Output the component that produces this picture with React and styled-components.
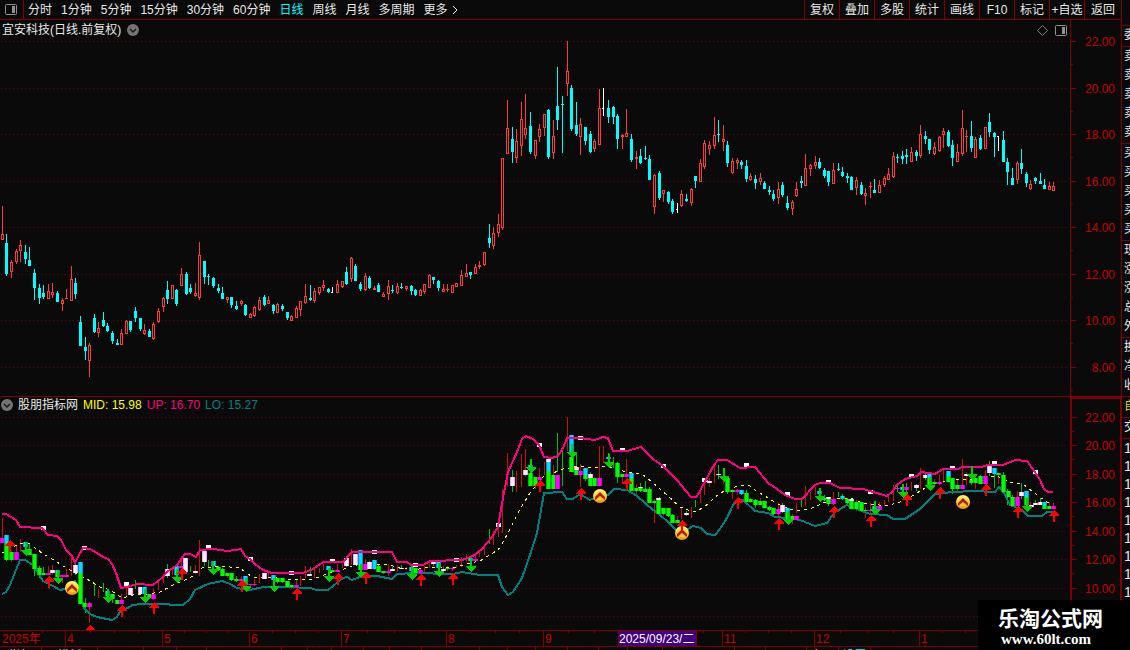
import React from "react"
import styled, { createGlobalStyle } from "styled-components"

const COLORS = {
  bg: "#0a0a0a",
  line: "#800000",
  label: "#c80000",
  text: "#e8e8e8",
  rise: "#ff3a3a",
  fall: "#00ffff",
  upper: "#ff0080",
  lower: "#008080",
  mid: "#ffff00",
}

const GlobalStyle = createGlobalStyle`
  body {
    margin: 0;
    overflow: hidden;
    background: ${COLORS.bg};
    color: ${COLORS.text};
    font: 12px/16px "Liberation Sans", "Noto Sans CJK SC", sans-serif;
  }
`

// kind (r: rise, c: fall, w: flat), high, body top, body bottom, low
const CANDLES = `
r 206 234 240 240|c 234 243 274 276|r 260 262 272 278|r 249 251 262 264|r 240 245 251 262
c 245 252 259 264|c 247 260 266 266|c 269 273 288 300|c 284 288 298 304|c 285 293 297 299
r 284 291 299 299|r 283 292 295 298|c 291 293 302 302|r 298 300 304 311|r 289 298 299 299
r 266 279 301 301|c 278 283 294 299|c 316 322 346 346|c 337 347 351 360|r 343 345 361 377
c 314 318 332 333|r 322 328 333 337|c 312 320 326 327|c 323 326 331 332|c 331 333 341 344
c 339 343 345 345|r 329 333 345 345|r 320 321 334 334|c 321 321 330 332|c 307 311 318 322
c 318 318 329 331|r 324 330 334 335|c 329 331 337 337|r 322 324 339 340|r 308 311 322 323
r 297 298 307 312|c 281 290 299 304|r 285 285 299 299|c 289 290 304 306|r 268 274 286 286
c 272 274 294 295|c 284 288 292 294|r 283 293 296 297|r 242 255 298 300|c 261 261 277 284
c 274 276 277 285|c 277 278 286 288|c 284 288 291 293|c 287 293 299 299|r 297 297 300 303
c 297 297 305 308|c 301 306 309 310|r 300 301 304 306|c 304 305 315 316|r 313 314 318 318
r 306 307 316 317|r 297 300 310 311|c 295 297 305 306|r 296 300 304 304|c 304 305 311 314
r 303 304 313 313|c 304 306 309 311|c 312 312 318 320|r 315 316 321 321|r 306 308 318 318
r 301 301 310 316|r 284 296 303 304|c 285 298 300 301|r 288 291 301 303|r 287 287 293 295
r 280 285 288 291|c 288 289 292 293|w 287 292 293 293|r 280 284 293 293|r 281 281 287 288
c 267 272 284 285|r 257 258 279 282|c 264 266 281 281|c 282 284 289 291|r 273 276 290 291
c 276 278 288 289|r 286 288 290 290|c 283 285 292 292|r 292 294 297 297|r 280 286 294 300
c 285 290 291 293|r 283 286 293 294|c 283 287 288 289|r 286 286 289 291|c 285 286 291 295
c 289 290 295 296|r 289 290 296 296|r 284 284 292 294|r 274 275 288 288|c 277 277 280 284
c 280 281 288 291|r 284 289 292 292|r 284 289 290 292|r 285 285 293 293|r 283 283 287 287
r 270 275 286 286|r 264 273 277 277|c 272 272 275 279|r 264 267 274 274|r 261 265 267 269
r 252 252 265 266|c 224 238 243 248|r 227 233 246 249|r 214 224 233 237|r 158 158 228 230
r 100 128 154 154|c 127 139 152 163|r 129 141 158 163|r 102 119 146 156|r 94 128 135 139
c 112 126 152 154|r 140 140 156 159|r 124 129 137 142|r 114 114 128 136|c 109 110 157 159
r 120 136 153 159|c 67 106 120 130|c 96 104 105 153|r 41 71 84 96|c 85 88 129 131
c 102 125 134 136|r 118 124 137 155|c 127 127 141 145|c 131 134 152 153|r 139 141 149 152
r 89 108 145 145|w 88 108 109 116|c 100 108 117 123|c 106 107 117 124|c 114 116 139 149
r 134 135 137 149|r 109 133 137 137|c 134 139 160 162|r 151 157 159 169|c 149 156 163 164
c 146 158 159 160|c 155 159 180 180|r 174 175 207 214|c 171 173 198 200|r 190 190 194 202
c 191 192 202 204|c 199 201 212 214|w 203 209 210 213|r 190 194 206 207|c 194 199 201 202
r 188 189 203 206|c 176 176 181 188|r 159 163 182 182|r 140 143 167 169|r 141 145 149 155
r 117 135 146 149|c 120 134 135 142|r 125 139 142 151|c 141 145 163 167|r 158 161 173 174
r 158 160 163 169|c 160 162 165 169|c 160 166 179 182|r 173 176 180 181|c 175 179 183 189
r 173 178 182 185|c 181 183 189 189|c 186 190 192 195|c 190 194 199 201|r 182 189 198 204
c 182 185 195 197|c 196 203 208 210|r 200 202 209 215|r 182 189 196 197|c 176 181 183 188
r 154 168 186 186|r 164 165 169 176|r 156 162 166 169|c 158 162 168 169|c 168 170 176 178
c 171 171 182 186|r 163 170 184 184|c 163 169 170 171|c 167 172 176 177|c 173 176 178 183
c 176 177 190 190|r 177 180 188 195|c 182 185 194 195|r 188 193 196 205|r 182 186 187 198
c 179 190 193 193|r 180 185 193 193|r 176 178 185 187|r 168 174 180 180|r 152 156 177 178
c 154 157 158 163|c 151 156 159 164|c 149 155 157 164|r 147 152 162 162|c 150 152 156 161
r 125 134 156 158|c 131 136 139 144|c 139 139 150 154|r 142 147 154 155|r 136 137 151 152
r 128 131 135 148|c 130 132 146 147|c 140 145 158 166|r 144 152 162 162|r 110 128 154 156
r 130 136 137 152|c 121 136 148 152|r 137 139 158 158|c 135 138 149 150|r 127 127 149 149
c 113 122 132 137|c 132 133 137 157|w 136 136 137 151|c 131 140 162 162|c 158 162 172 185
c 168 178 185 185|r 161 163 180 184|c 149 163 169 174|c 172 174 183 187|r 180 184 189 190
c 177 178 181 184|c 173 181 184 184|c 179 185 189 189|r 182 186 190 190|r 182 186 191 191`
  .trim()
  .split(/[|\n]/)
  .map((row, index) => {
    const [kind, ...values] = row.split(" ")
    const [high, top, bottom, low] = values.map(Number)
    return { kind, high, top, bottom, low, x: Math.floor(2.35 + index * 4.592) }
  })

// x, colour, top, bottom of the painted bodies of the indicator
const BLOCKS = `
2 m 538 543|6 b 535 543|6 g 543 560|11 g 552 560|16 m 552 560|25 b 542 547|29 g 549 555|34 g 554 569
39 g 568 575|43 g 573 575|48 m 573 575|52 w 570 573|57 b 570 572|57 g 572 577|61 m 575 577|66 m 575 577
75 w 565 573|80 b 562 573|80 g 573 604|84 g 603 607|89 m 603 607|107 b 591 593|107 g 593 596|112 g 594 599
117 g 600 604|121 m 600 604|130 w 588 595|140 w 587 594|144 b 587 594|149 g 594 598|153 m 594 599
167 w 569 576|176 b 566 575|181 m 566 568|185 w 558 572|195 w 571 573|204 w 551 562|213 b 561 566
218 g 567 570|222 g 569 576|227 g 573 576|231 g 573 580|236 g 579 581|241 m 579 581|245 b 576 581
245 g 581 585|250 m 584 585|254 m 584 585|264 w 573 579|273 b 575 580|277 g 578 582|282 g 578 582
287 g 581 587|291 g 585 587|296 m 585 587|309 w 574 576|328 b 566 570|332 g 570 572|337 m 570 572
346 w 558 566|355 w 554 565|360 b 550 565|360 g 565 570|365 m 564 570|369 w 562 569|374 b 560 569
378 g 566 572|383 g 571 573|388 m 571 573|392 w 569 571|401 w 568 569|411 b 567 571|415 g 568 573
420 m 570 573|433 w 561 564|438 b 560 568|443 w 569 571|447 g 568 569|452 m 568 569|470 b 558 561
475 m 559 561|512 w 477 486|525 w 470 475|530 b 465 470|530 g 473 486|535 g 477 486|539 m 477 480
548 w 459 462|548 b 462 471|548 g 471 489|553 g 475 489|557 m 475 489|571 b 435 452|571 g 457 472
576 w 467 470|576 g 470 475|580 m 471 475|585 b 468 475|585 g 475 479|590 w 474 478|590 g 478 486
594 g 478 486|599 m 478 486|608 b 457 459|617 g 463 477|622 g 474 477|626 m 474 477|631 b 473 478
631 g 478 491|636 g 488 491|640 w 487 488|640 g 488 491|645 g 489 492|649 g 489 503|654 g 501 503
658 w 498 500|658 g 500 514|663 g 508 514|668 g 508 516|672 g 515 523|677 g 520 523|686 w 513 515
705 w 480 482|709 w 481 483|718 w 474 475|727 g 478 492|732 g 490 492|737 m 490 492|741 b 490 494
746 g 493 502|750 g 499 502|755 g 500 505|760 g 501 505|764 g 501 508|769 g 507 510|773 g 508 514
778 m 509 514|782 w 505 512|787 b 508 512|787 g 512 520|792 g 516 520|796 m 516 520|819 b 491 494
824 g 498 500|828 w 497 499|828 g 499 504|833 m 499 504|842 b 496 498|842 g 498 499|847 g 499 503
851 w 499 501|851 g 501 509|856 g 502 509|861 g 502 511|865 g 510 511|870 m 510 511|874 b 506 510
879 m 506 510|897 m 488 489|902 b 487 490|906 m 487 490|916 w 485 488|925 w 475 478|929 b 474 478
929 g 478 485|934 g 482 484|939 m 482 484|948 b 471 476|948 g 476 482|952 g 478 489|957 g 485 489
962 m 485 489|966 w 474 476|971 g 480 483|975 g 478 483|980 g 476 484|985 m 476 484|989 w 465 473
994 b 468 474|998 g 473 475|1003 g 475 492|1008 g 491 497|1012 g 497 506|1017 m 497 506|1021 w 492 496
1026 b 491 497|1026 g 497 505|1031 w 505 507|1035 w 503 505|1040 w 502 505|1044 b 502 505|1044 g 505 509
1049 g 506 509|1053 m 506 509`
  .trim()
  .split(/[|\n]/)
  .map((row) => {
    const [x, tone, top, bottom] = row.split(" ")
    return { x: Number(x), tone, top: Number(top), bottom: Number(bottom) }
  })

// edge and centre of each body colour
const TONES = {
  g: ["#00b400", "#00ff00"],
  b: ["#0090e8", "#00dcff"],
  m: ["#d000d0", "#ff00ff"],
  w: ["#ff9cff", "#fff0ff"],
}

const UP_LINE =
  "2,514 6,514 11,517 16,520 20,527 42,528 48,535 57,536 61,540 66,550 72,556 75,563 79,555 83,548 90,549 97,553 103,557 108,559 112,564 116,573 121,588 127,587 137,584 153,585 163,577 167,572 177,565 185,554 190,554 196,557 200,550 213,549 228,551 241,549 245,556 250,559 255,564 263,570 272,573 303,573 313,569 323,562 343,562 352,552 392,552 397,562 407,562 411,565 423,565 430,561 462,560 473,556 482,549 492,537 498,527 503,498 508,472 517,452 522,439 526,436 533,439 539,445 544,457 552,458 558,456 563,448 567,438 580,438 595,440 603,437 608,438 613,451 627,451 641,447 653,459 663,466 670,473 677,480 686,491 691,497 696,497 699,493 703,485 708,476 714,465 718,460 727,460 740,468 755,467 769,484 773,486 785,495 795,499 802,499 815,485 820,483 830,483 840,488 863,489 887,496 892,492 897,485 905,479 917,476 921,472 935,474 943,469 958,469 962,467 982,467 987,465 1003,465 1015,460 1027,461 1035,472 1040,480 1044,489 1048,492 1053,492"

const LO_LINE =
  "2,594 6,592 10,585 20,560 25,560 33,565 43,581 53,586 60,590 65,589 75,581 81,596 84,608 90,614 97,617 112,620 117,617 121,610 128,608 132,605 143,604 167,604 172,605 183,605 190,599 195,590 208,584 222,581 230,584 237,588 250,590 263,587 287,587 310,588 317,590 328,590 343,578 347,577 352,580 360,577 377,576 392,579 397,574 413,573 453,574 462,572 480,575 498,575 502,587 508,595 513,592 522,578 530,555 537,533 544,493 562,492 567,499 573,499 580,494 590,500 595,498 608,495 614,489 627,490 637,496 653,510 658,513 670,524 677,531 683,532 693,526 701,528 707,534 715,535 720,529 727,518 733,505 739,500 743,500 755,511 768,513 775,517 787,518 800,520 815,526 827,523 835,512 847,505 857,509 870,514 887,515 893,519 905,519 920,509 935,494 953,492 973,491 995,492 999,487 1004,493 1010,505 1015,507 1022,510 1028,516 1042,516 1047,512 1053,512"

const MID_LINE =
  "2,553 12,548 20,543 30,544 42,553 60,564 73,572 87,579 100,587 110,590 122,598 133,595 148,594 160,592 173,585 190,578 202,568 220,566 240,568 252,577 277,578 290,580 313,579 330,573 347,568 360,564 390,565 400,568 413,570 430,567 457,567 470,563 480,561 493,553 500,548 510,529 520,509 530,493 543,477 563,469 580,466 590,468 607,466 623,471 642,474 653,483 667,495 680,507 693,512 703,508 720,493 730,489 740,485 750,486 758,492 770,499 783,507 797,511 810,509 823,503 837,499 850,498 863,503 887,506 903,501 917,493 930,485 940,483 953,479 973,479 997,476 1010,482 1023,484 1037,495 1047,502 1053,502"

const MARKS = [
  [43, 528], [84, 548], [126, 584], [208, 547], [250, 559], [291, 573],
  [332, 561], [374, 552], [415, 565], [456, 560], [498, 525], [539, 445],
  [580, 438], [622, 450], [663, 466], [704, 480], [746, 465], [787, 494],
  [828, 482], [870, 492], [911, 476], [952, 468], [994, 463], [1035, 472],
]

const BUYS = [
  [10, 540], [49, 576], [90, 625], [122, 605], [154, 602], [182, 568],
  [242, 580], [297, 588], [338, 573], [366, 572], [421, 574], [453, 573],
  [540, 480], [581, 488], [627, 478], [682, 520], [738, 497], [779, 518],
  [834, 506], [871, 515], [907, 494], [940, 487], [986, 484], [1018, 506],
  [1054, 510],
]

const SELLS = [
  [26, 556], [58, 584], [108, 603], [145, 603], [177, 583], [213, 575],
  [246, 592], [274, 592], [329, 582], [361, 578], [412, 580], [439, 577],
  [471, 572], [531, 473], [572, 458], [609, 468], [724, 482], [788, 525],
  [820, 502], [875, 515], [903, 498], [930, 491], [972, 480], [1027, 512],
]

const COINS = [[72, 588], [600, 496], [682, 533], [963, 502]]

const PRICE_SCALE = [
  [41, "22.00"], [88, "20.00"], [134, "18.00"], [181, "16.00"],
  [227, "14.00"], [274, "12.00"], [320, "10.00"], [367, "8.00"],
]

const INDICATOR_SCALE = [
  [417, "22.00"], [445, "20.00"], [474, "18.00"], [502, "16.00"],
  [531, "14.00"], [559, "12.00"], [588, "10.00"], [616, ""],
]

const MONTHS = [
  [65, "4"], [162, "5"], [249, "6"], [341, "7"], [446, "8"],
  [543, "9"], [722, "11"], [814, "12"], [919, "1"],
]

const WEEKS = [
  42, 90, 114, 138, 184, 206, 227, 272, 295, 318, 367, 394, 420, 470, 495,
  519, 568, 594, 703, 745, 768, 791, 840, 867, 893, 942, 965,
]

const PERIODS = [
  "分时", "1分钟", "5分钟", "15分钟", "30分钟", "60分钟",
  "日线", "周线", "月线", "多周期",
]

const ACTIONS = [
  "复权", "叠加", "多股", "统计", "画线", "F10", "标记", "+自选", "返回",
]

const QUOTE_GROUPS = [
  ["委"],
  ["卖", "卖", "卖", "卖", "卖"],
  ["买", "买", "买", "买", "买"],
  ["现", "涨", "涨", "总", "外"],
  ["换", "净", "收"],
]

const TABS = [
  [42, "指标"], [56, "模板"], [46, ""], [33, ""], [30, ""], [75, ""],
  [26, ""], [24, ""], [32, ""], [26, ""], [32, ""], [58, ""], [28, ""],
  [28, ""], [32, ""], [31, ""], [29, ""], [35, ""], [72, ""], [31, ""],
  [41, ""], [32, "窗口"], [32, "设置", true],
]

const Page = styled.div`
  display: flex;
  height: 100vh;
  overflow: hidden;
`

const Main = styled.main`
  display: flex;
  flex: 1;
  flex-direction: column;
  min-width: 0;
`

const Toolbar = styled.header`
  display: flex;
  flex: none;
  box-sizing: border-box;
  height: 20px;
  border-bottom: 1px solid ${COLORS.line};
`

const ToolButton = styled.button`
  padding: 0;
  border: 0;
  background: none;
  color: ${(props) => (props.$active ? COLORS.fall : COLORS.text)};
  font: inherit;
  line-height: 18px;
  white-space: nowrap;
`

const LayoutButton = styled(ToolButton)`
  display: flex;
  align-items: center;
  padding: 0 6px 0 5px;
  border-right: 1px solid ${COLORS.line};
`

const Periods = styled.nav`
  display: flex;
  flex: 1;
  gap: 9px;
  padding-left: 4px;
`

const MoreButton = styled(ToolButton)`
  display: flex;
  align-items: center;
  gap: 4px;
`

const Actions = styled.div`
  display: flex;
`

const ActionButton = styled(ToolButton)`
  box-sizing: border-box;
  width: 35px;
  border-left: 1px solid ${COLORS.line};

  &:last-child {
    width: 37px;
  }
`

const Pane = styled.section`
  display: flex;
  flex: none;
`

const IndicatorPane = styled(Pane)`
  border-top: 1px solid ${COLORS.line};
`

const PlotColumn = styled.div`
  flex: 1;
  min-width: 0;
`

const PaneHeader = styled.div`
  display: flex;
  align-items: center;
  height: 20px;
  gap: 6px;
  padding: 0 3px 0 2px;
`

const IndicatorHeader = styled(PaneHeader)`
  height: 16px;
  gap: 5px;
  padding: 0 1px;
`

const PaneTitle = styled.h2`
  margin: 0;
  font: inherit;
`

const Reading = styled.span`
  color: ${(props) => props.$color};
`

const IconButton = styled.button`
  display: flex;
  padding: 0;
  border: 0;
  background: none;
`

const PaneTools = styled.div`
  display: flex;
  align-items: center;
  gap: 7px;
  margin-left: auto;
`

const Drawing = styled.svg`
  display: block;
  width: 100%;
  font: inherit;
`

const Scale = styled.div`
  box-sizing: border-box;
  width: 51px;
  border-left: 1px solid ${COLORS.line};
`

const FramedScale = styled(Scale)`
  border-width: 2px 1px 0 2px;
  border-style: solid;
  border-color: ${COLORS.line};
`

const Tabs = styled.footer`
  display: flex;
  flex: 1;
  overflow: hidden;
`

const Tab = styled.button`
  flex: none;
  box-sizing: border-box;
  width: ${(props) => props.$width}px;
  height: 18px;
  padding: 0;
  border: 0;
  border-right: 1px solid ${COLORS.line};
  background: none;
  color: ${(props) => (props.$active ? COLORS.fall : COLORS.text)};
  font: inherit;
`

const Sidebar = styled.aside`
  box-sizing: border-box;
  width: 9px;
  padding-top: 25px;
  overflow: hidden;
  border-left: 1px solid ${COLORS.line};
`

const QuoteGroup = styled.div`
  width: 40px;
  padding-bottom: 1px;
  border-top: 1px solid ${COLORS.line};
  color: ${(props) => props.$color || COLORS.text};
`

const QuoteRow = styled.div`
  height: ${(props) => (props.$tick ? 18 : 19)}px;
  padding-left: 2px;
  font-size: ${(props) => (props.$tick ? 14 : 12)}px;
  line-height: 19px;
`

const Watermark = styled.div`
  position: fixed;
  right: 0;
  bottom: 0;
  box-sizing: border-box;
  width: 152px;
  height: 50px;
  padding: 6px 0 0 20px;
  background: #000;
  color: #fff;
  font-weight: bold;
`

const SiteName = styled.div`
  font-size: 21px;
  line-height: 25px;
`

const SiteLink = styled.a`
  display: block;
  padding-left: 3px;
  color: inherit;
  font: bold 15px/16px "Liberation Serif", serif;
  text-decoration: none;
`

const PanelIcon = () => (
  <svg width="12" height="11">
    <rect x="0.5" y="0.5" width="11" height="10" rx="1" fill="none" stroke="#909090" />
    <rect x="7" y="2" width="3" height="7" fill="#909090" />
  </svg>
)

const ChevronBadge = () => (
  <svg width="12" height="12">
    <circle cx="6" cy="6" r="6" fill="#747474" />
    <path d="M3 5l3 3 3-3" fill="none" stroke="#181818" strokeWidth="1.5" />
  </svg>
)

const GridLines = ({ scale }) =>
  scale.map(([y]) => (
    <line
      key={y}
      x1="1"
      x2="1067"
      y1={y + 0.5}
      y2={y + 0.5}
      stroke="#700606"
      strokeDasharray="1 3"
    />
  ))

const ScaleTicks = ({ scale, left, step }) =>
  scale.map(([y, label]) => (
    <g key={y}>
      <rect x={left} y={y} width="5" height="1" fill={COLORS.line} />
      <rect x={left} y={y + step} width="2" height="1" fill={COLORS.line} />
      {label && (
        <text x="1115" y={y + 5} textAnchor="end" fill={COLORS.label}>
          {label}
        </text>
      )}
    </g>
  ))

const Candle = ({ kind, high, top, bottom, low, x }) => {
  const color = { r: COLORS.rise, c: COLORS.fall, w: "#fff" }[kind]
  const height = bottom - top
  return (
    <g fill={color}>
      <rect x={x} y={high} width="1" height={low - high} />
      <rect x={x - 1} y={top} width={kind === "w" ? 2 : 3} height={height} />
      {kind === "r" && height > 2 && (
        <rect x={x} y={top + 1} width="1" height={height - 2} fill={COLORS.bg} />
      )}
    </g>
  )
}

// The indicator shows the same highs and lows on a flatter scale
const toIndicator = (y) => Math.round(417 + (y - 41) * 0.613)

const ThinWick = ({ kind, high, low, x }) => (
  <rect
    x={x}
    y={toIndicator(high)}
    width="1"
    height={toIndicator(low) - toIndicator(high)}
    fill={kind === "c" ? "#00c000" : "#c81400"}
  />
)

const Block = ({ x, tone, top, bottom }) => (
  <g>
    <rect x={x - 2} y={top} width="5" height={bottom - top} fill={TONES[tone][0]} />
    <rect x={x - 1} y={top} width="3" height={bottom - top} fill={TONES[tone][1]} />
  </g>
)

const Coin = ({ x, y }) => (
  <g transform={`translate(${x} ${y})`} shapeRendering="auto">
    <circle r="7" fill="url(#gold)" />
    <path d="M-5 1L0-4 5 1V4L0 0-5 4z" fill="#b81808" />
    <path d="M-3 4L0 1 3 4z" fill="#ffd820" />
  </g>
)

const PriceChart = () => (
  <Drawing viewBox="0 40 1070 356" shapeRendering="crispEdges">
    <GridLines scale={PRICE_SCALE} />
    {CANDLES.map((candle) => (
      <Candle key={candle.x} {...candle} />
    ))}
  </Drawing>
)

const IndicatorChart = () => (
  <Drawing viewBox="0 413 1070 217" shapeRendering="crispEdges">
    <defs>
      <linearGradient id="gold" x1="0" y1="0" x2="0" y2="1">
        <stop offset="0" stopColor="#fff490" />
        <stop offset="0.5" stopColor="#ffd428" />
        <stop offset="1" stopColor="#f08c18" />
      </linearGradient>
    </defs>
    <GridLines scale={INDICATOR_SCALE} />
    {CANDLES.map((candle) => (
      <ThinWick key={candle.x} {...candle} />
    ))}
    <g fill="none">
      <polyline points={LO_LINE} stroke={COLORS.lower} strokeWidth="2" />
      <polyline points={MID_LINE} stroke={COLORS.mid} strokeDasharray="3 4" />
    </g>
    {BLOCKS.map((block) => (
      <Block key={`${block.x}-${block.top}`} {...block} />
    ))}
    {MARKS.map(([x, y]) => (
      <rect key={x} x={x - 2} y={y - 2} width="5" height="4" fill="#fff" />
    ))}
    <polyline points={UP_LINE} fill="none" stroke={COLORS.upper} strokeWidth="2" />
    {COINS.map(([x, y]) => (
      <Coin key={x} x={x} y={y} />
    ))}
    {SELLS.map(([x, y]) => (
      <path
        key={x}
        d={`M${x} ${y}l-5 -5v-1h4v-8h2v8h4v1z`}
        fill="#00d000"
      />
    ))}
    {BUYS.map(([x, y]) => (
      <path key={x} d={`M${x} ${y}l5 5v1h-4v6h-2v-6h-4v-1z`} fill="#ff0000" />
    ))}
  </Drawing>
)

const TimeAxis = () => (
  <Drawing viewBox="0 630 1121 17" shapeRendering="crispEdges">
    <g fill={COLORS.line}>
      <rect y="630" width="1121" height="1" />
      <rect y="646" width="1121" height="1" />
      {WEEKS.map((x) => (
        <rect key={x} x={x} y="631" width="1" height="2" />
      ))}
      {MONTHS.map(([x]) => (
        <rect key={x} x={x} y="631" width="1" height="15" />
      ))}
    </g>
    <g fill={COLORS.label}>
      <text x="2" y="643">2025年</text>
      {MONTHS.map(([x, label]) => (
        <text key={x} x={x + 2} y="643">
          {label}
        </text>
      ))}
    </g>
    <rect x="618" y="630" width="79" height="16" fill={COLORS.line} />
    <rect x="619" y="631" width="77" height="15" fill="#400080" />
    <text x="619" y="643" fill="#fff">
      2025/09/23/二
    </text>
  </Drawing>
)

const App = () => (
  <Page>
    <GlobalStyle />
    <Main>
      <Toolbar>
        <LayoutButton type="button" aria-label="布局">
          <PanelIcon />
        </LayoutButton>
        <Periods>
          {PERIODS.map((period) => (
            <ToolButton key={period} type="button" $active={period === "日线"}>
              {period}
            </ToolButton>
          ))}
          <MoreButton type="button">
            更多
            <svg width="8" height="10">
              <path d="M1 1l4 4-4 4" fill="none" stroke={COLORS.text} />
            </svg>
          </MoreButton>
        </Periods>
        <Actions>
          {ACTIONS.map((action) => (
            <ActionButton key={action} type="button">
              {action}
            </ActionButton>
          ))}
        </Actions>
      </Toolbar>

      <Pane>
        <PlotColumn>
          <PaneHeader>
            <PaneTitle>宜安科技(日线.前复权)</PaneTitle>
            <IconButton type="button" aria-label="展开">
              <ChevronBadge />
            </IconButton>
            <PaneTools>
              <IconButton type="button" aria-label="标记点">
                <svg width="11" height="11">
                  <path d="M5.5 .5l5 5-5 5-5-5z" fill="none" stroke="#777" />
                </svg>
              </IconButton>
              <IconButton type="button" aria-label="侧栏">
                <PanelIcon />
              </IconButton>
            </PaneTools>
          </PaneHeader>
          <PriceChart />
        </PlotColumn>
        <Scale>
          <Drawing viewBox="1071 20 50 376" shapeRendering="crispEdges">
            <ScaleTicks scale={PRICE_SCALE} left={1071} step={23} />
          </Drawing>
        </Scale>
      </Pane>

      <IndicatorPane>
        <PlotColumn>
          <IndicatorHeader>
            <IconButton type="button" aria-label="展开">
              <ChevronBadge />
            </IconButton>
            <PaneTitle>股朋指标网</PaneTitle>
            <Reading $color={COLORS.mid}>MID: 15.98</Reading>
            <Reading $color={COLORS.upper}>UP: 16.70</Reading>
            <Reading $color={COLORS.lower}>LO: 15.27</Reading>
          </IndicatorHeader>
          <IndicatorChart />
        </PlotColumn>
        <FramedScale>
          <Drawing viewBox="1072 399 48 231" shapeRendering="crispEdges">
            <ScaleTicks scale={INDICATOR_SCALE} left={1072} step={14} />
          </Drawing>
        </FramedScale>
      </IndicatorPane>

      <TimeAxis />
      <Tabs>
        {TABS.map(([width, label, active], index) => (
          <Tab key={index} type="button" $width={width} $active={active}>
            {label}
          </Tab>
        ))}
      </Tabs>
    </Main>

    <Sidebar>
      {QUOTE_GROUPS.map((rows, index) => (
        <QuoteGroup key={index}>
          {rows.map((label, row) => (
            <QuoteRow key={row}>{label}</QuoteRow>
          ))}
        </QuoteGroup>
      ))}
      <QuoteGroup $color="#d8d800">
        <QuoteRow>自</QuoteRow>
      </QuoteGroup>
      <QuoteGroup>
        <QuoteRow>交</QuoteRow>
      </QuoteGroup>
      <QuoteGroup>
        {[0, 1, 2, 3, 4, 5, 6, 7, 8].map((row) => (
          <QuoteRow key={row} $tick>
            1
          </QuoteRow>
        ))}
      </QuoteGroup>
    </Sidebar>

    <Watermark>
      <SiteName>乐淘公式网</SiteName>
      <SiteLink href="#">www.60lt.com</SiteLink>
    </Watermark>
  </Page>
)

export default App
